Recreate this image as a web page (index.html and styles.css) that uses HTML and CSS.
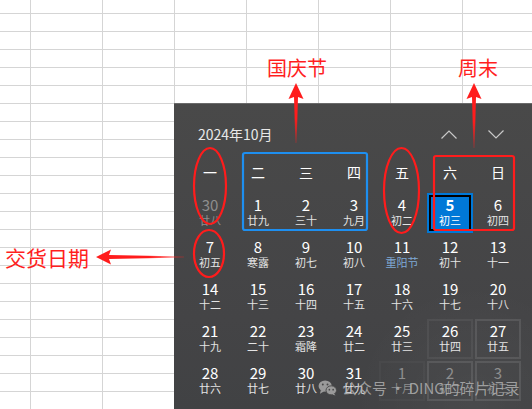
FILE: index.html
```html
<!DOCTYPE html>
<html lang="zh-CN">
  <head>
    <meta charset="UTF-8" />
    <meta name="viewport" content="width=device-width, initial-scale=1.0" />
    <title>交货日期</title>
    <link rel="stylesheet" href="styles.css">
  </head>
  <body>
    <div class="sheet"></div>

    <div class="calendar">
      <div class="calendar-header">
        <span class="month-title">2024年10月</span>
        <div class="nav">
          <svg class="chevron" viewBox="0 0 16 9"><path d="M0.5 8.5 L8 1 L15.5 8.5" /></svg>
          <svg class="chevron" viewBox="0 0 16 9"><path d="M0.5 0.5 L8 8 L15.5 0.5" /></svg>
        </div>
      </div>
      <div class="weekdays">
        <span>一</span><span>二</span><span>三</span><span>四</span><span>五</span><span>六</span><span>日</span>
      </div>
      <div class="days" id="days"></div>
    </div>

    <!-- red / blue pen marks drawn on top -->
    <svg class="marks" viewBox="0 0 532 409">
      <defs>
        <linearGradient id="fade-down" x1="0" y1="0" x2="0" y2="1">
          <stop offset="0" stop-color="#ff1c1c" />
          <stop offset="0.6" stop-color="#ff1c1c" />
          <stop offset="1" stop-color="#ff1c1c" stop-opacity="0.25" />
        </linearGradient>
        <linearGradient id="fade-right" x1="0" y1="0" x2="1" y2="0">
          <stop offset="0" stop-color="#ff1c1c" />
          <stop offset="0.6" stop-color="#ff1c1c" />
          <stop offset="1" stop-color="#ff1c1c" stop-opacity="0.3" />
        </linearGradient>
      </defs>
      <polygon fill="url(#fade-down)" points="296,83 303.5,99 298,97 296.6,143 295.4,143 294,97 288.5,99" />
      <polygon fill="url(#fade-down)" points="474,83 481.5,99 476,97 474.6,148 473.4,148 472,97 466.5,99" />
      <polygon fill="url(#fade-right)" points="96,257 111,249.5 109,255 184,256.5 184,257.5 109,259 111,264.5" />

      <rect class="pen-blue" x="243" y="153" width="124" height="77" rx="2" />
      <rect class="pen-red" x="434" y="156" width="80" height="74" rx="2" />
      <ellipse class="pen-red" cx="210" cy="186" rx="16" ry="38" />
      <ellipse class="pen-red" cx="209" cy="253.5" rx="15" ry="23.5" />
      <ellipse class="pen-red" cx="401.5" cy="190.5" rx="17.5" ry="42.5" />
    </svg>

    <span class="label label-holiday">国庆节</span>
    <span class="label label-weekend">周末</span>
    <span class="label label-delivery">交货日期</span>

    <div class="watermark">
      <svg class="wechat" viewBox="0 0 20 17">
        <ellipse cx="7.5" cy="6.5" rx="7" ry="6" fill="#9a9a9a" />
        <path d="M3 10.5 L2 14.5 L6.5 12z" fill="#9a9a9a" />
        <circle cx="5" cy="4.8" r="1" fill="#474747" />
        <circle cx="10" cy="4.8" r="1" fill="#474747" />
        <ellipse cx="14" cy="11" rx="5.6" ry="4.8" fill="#9a9a9a" stroke="#474747" stroke-width="1" />
        <path d="M17 14.5 L18.5 16.5 L15 15.5z" fill="#9a9a9a" />
        <circle cx="12" cy="10.3" r="0.9" fill="#474747" />
        <circle cx="16" cy="10.3" r="0.9" fill="#474747" />
      </svg>
      <span>公众号 · DING的碎片记录</span>
    </div>

    <script>
      // [date, lunar, extra class]
      const days = [
        ["30", "廿八", "other"], ["1", "廿九"], ["2", "三十"], ["3", "九月"], ["4", "初二"], ["5", "初三", "selected"], ["6", "初四"],
        ["7", "初五"], ["8", "寒露"], ["9", "初七"], ["10", "初八"], ["11", "重阳节", "festival"], ["12", "初十"], ["13", "十一"],
        ["14", "十二"], ["15", "十三"], ["16", "十四"], ["17", "十五"], ["18", "十六"], ["19", "十七"], ["20", "十八"],
        ["21", "十九"], ["22", "二十"], ["23", "霜降"], ["24", "廿二"], ["25", "廿三"], ["26", "廿四", "reveal-soft"], ["27", "廿五", "reveal"],
        ["28", "廿六"], ["29", "廿七"], ["30", "廿八"], ["31", "廿九"], ["1", "十月", "other reveal-faint"], ["2", "初二", "other reveal"], ["3", "初三", "other reveal"],
      ];

      const grid = document.getElementById("days");
      days.forEach(([num, lunar, extra]) => {
        const cell = document.createElement("div");
        cell.className = "day " + (extra || "");
        cell.innerHTML =
          '<span class="num">' + num + '</span><span class="lunar">' + lunar + "</span>";
        grid.appendChild(cell);
      });
    </script>
  </body>
</html>
```

FILE: styles.css
```css
body {
  margin: 0;
  width: 532px;
  height: 409px;
  overflow: hidden;
  position: relative;
  font-family: "Noto Sans CJK SC", "Noto Sans", sans-serif;
  background: #fff;
}

/* spreadsheet grid behind the popup */
.sheet {
  height: 100%;
  background-image:
    linear-gradient(90deg, #d5d5d5 1px, transparent 1px),
    linear-gradient(180deg, #d5d5d5 1px, transparent 1px);
  background-size: 72px 100%, 100% 18px;
  background-position: 30px 0, 0 13px;
}

.calendar {
  position: absolute;
  left: 174px;
  top: 103px;
  width: 358px;
  height: 306px;
  box-sizing: border-box;
  padding: 20px 11px 0 13px;
  overflow: hidden;
  border-top: 1px solid #6a6a6a;
  background:
    radial-gradient(circle at 300px 300px, rgba(255, 255, 255, 0.04), transparent 120px),
    linear-gradient(180deg, #494949, #444446 70%, #414244);
  color: #fff;
}

.calendar-header {
  height: 20px;
  display: flex;
  align-items: center;
  justify-content: space-between;
  padding-left: 11px;
}
.month-title {
  font-size: 14px;
  line-height: 20px;
  color: #e8e8e8;
}
.nav {
  display: flex;
  gap: 31px;
  margin-right: 17px;
}
.chevron {
  width: 16px;
  height: 9px;
  display: block;
}
.chevron path {
  fill: none;
  stroke: #c9c9c9;
  stroke-width: 1.2;
}

.weekdays,
.days {
  display: grid;
  grid-template-columns: repeat(7, 46px);
  column-gap: 2px;
}
.weekdays {
  margin-top: 13px;
  height: 30px;
  line-height: 30px;
  text-align: center;
  font-size: 14px;
}
.days {
  margin-top: 6px;
  grid-auto-rows: 40px;
  row-gap: 2px;
}

.day {
  display: flex;
  flex-direction: column;
  align-items: center;
  padding-top: 4px;
  box-sizing: border-box;
}
.day .num {
  font-size: 15px;
  line-height: 16px;
}
.day .lunar {
  font-size: 11px;
  line-height: 12px;
  margin-top: 1px;
  color: #e4e4e4;
}
.day.other .num,
.day.other .lunar {
  color: #8e8e8e;
}
.day.festival .lunar {
  color: #7fa9d6;
}
.day.selected {
  background: #0078d7;
  box-shadow: inset 0 0 0 2px #0078d7, inset 0 0 0 4px #000;
}
.day.selected .num {
  font-weight: bold;
}
.day.selected .lunar {
  color: #fff;
}

/* hover light on the cells near the pointer */
.day.reveal {
  box-shadow: inset 0 0 0 2px rgba(255, 255, 255, 0.1);
}
.day.reveal-soft {
  box-shadow: inset 0 0 0 2px rgba(255, 255, 255, 0.06);
}
.day.reveal-faint {
  box-shadow: inset 0 0 0 2px rgba(255, 255, 255, 0.03);
}

.marks {
  position: absolute;
  left: 0;
  top: 0;
  width: 532px;
  height: 409px;
  pointer-events: none;
}
.pen-red,
.pen-blue {
  fill: none;
  stroke-width: 2.2;
}
.pen-red {
  stroke: #ff1c1c;
}
.pen-blue {
  stroke: #1e8ff0;
}

.label {
  position: absolute;
  color: #ff1f1f;
  font-size: 20px;
  line-height: 24px;
  white-space: nowrap;
}
.label-holiday {
  left: 267px;
  top: 56px;
}
.label-weekend {
  left: 458px;
  top: 56px;
}
.label-delivery {
  left: 5px;
  top: 245px;
  font-size: 21px;
}

.watermark {
  position: absolute;
  left: 318px;
  top: 377px;
  display: flex;
  align-items: center;
  gap: 5px;
  color: rgba(175, 175, 175, 0.85);
  font-size: 15px;
  line-height: 22px;
  white-space: nowrap;
}
.wechat {
  width: 19px;
  height: 16px;
}
```
